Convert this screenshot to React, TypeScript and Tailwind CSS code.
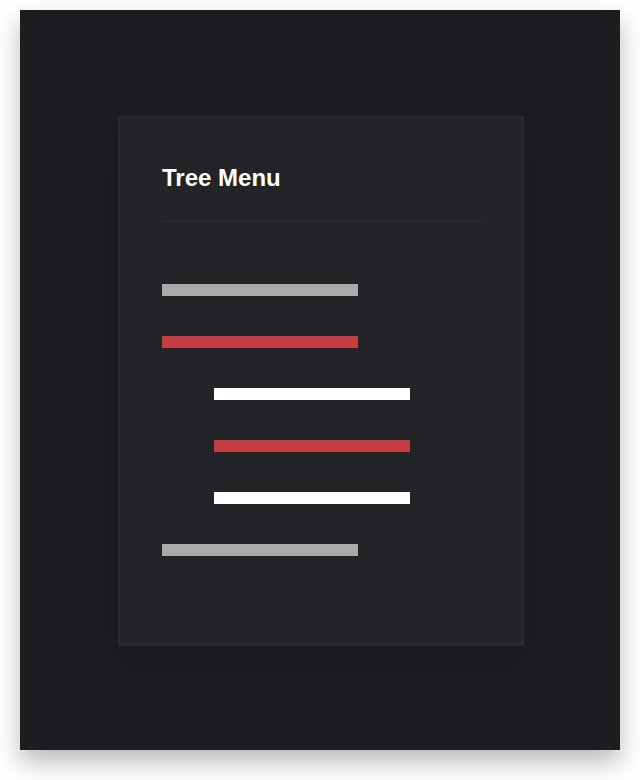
import React from 'react';

const rows = [
  { indent: false, color: 'bg-[#aaaaaa]' },
  { indent: false, color: 'bg-[#c53e43]' },
  { indent: true, color: 'bg-white' },
  { indent: true, color: 'bg-[#c53e43]' },
  { indent: true, color: 'bg-white' },
  { indent: false, color: 'bg-[#aaaaaa]' },
];

const App = () => {
  return (
    <main className="min-h-[780px] w-full bg-white pt-[10px] pl-[20px] font-['Liberation_Sans',Arial,sans-serif]">
      {/* Outer card */}
      <div className="w-[600px] h-[740px] bg-[#1c1d20] shadow-[0_12px_24px_rgba(0,0,0,0.28)] pt-[106px] pl-[98px]">
        {/* Tree panel */}
        <div className="w-[406px] h-[530px] bg-[#232428] border-2 border-[#2a2b2f] shadow-[0_20px_40px_rgba(0,0,0,0.12)] pt-[45px] pl-[42px]">
          <h1 className="text-[24px] leading-[30px] font-bold text-white">Tree Menu</h1>
          <div className="w-[322px] h-[2px] bg-[#2a2b2f] mt-[27px]" />

          {/* Menu items */}
          <ul className="mt-[62px] flex flex-col gap-[40px]">
            {rows.map((row, i) => (
              <li
                key={i}
                className={`h-[12px] w-[196px] ${row.color} ${row.indent ? 'ml-[52px]' : ''}`}
              />
            ))}
          </ul>
        </div>
      </div>
    </main>
  );
};

export default App;
